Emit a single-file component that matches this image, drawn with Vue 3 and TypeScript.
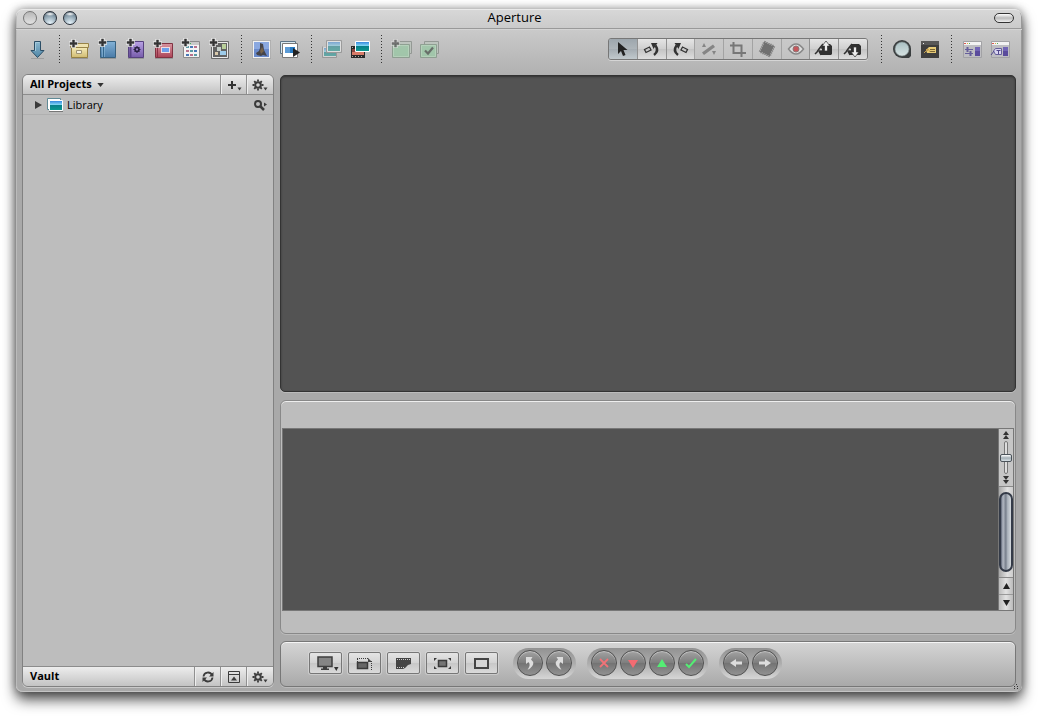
<script setup lang="ts">
import { ref } from 'vue'

const project = ref('All Projects')
const zoomLevel = ref(50)
const tool = ref('Selection')

interface Tool {
  name: string
  off?: boolean
}

const tools: Tool[] = [
  { name: 'Selection' },
  { name: 'Rotate left' },
  { name: 'Rotate right' },
  { name: 'Straighten', off: true },
  { name: 'Crop', off: true },
  { name: 'Spot and patch', off: true },
  { name: 'Red eye', off: true },
  { name: 'Lift' },
  { name: 'Stamp' },
]
</script>

<template>
  <div class="desktop">
    <svg class="defs" width="0" height="0" aria-hidden="true">
      <defs>
        <linearGradient id="blue" x2="0" y2="1"><stop stop-color="#83b2d6" /><stop offset="1" stop-color="#4a7ba8" /></linearGradient>
        <linearGradient id="arrow" x2="0" y2="1"><stop stop-color="#8db9d0" /><stop offset="1" stop-color="#4f86a6" /></linearGradient>
        <linearGradient id="purple" x2="0" y2="1"><stop stop-color="#b9a2e4" /><stop offset="1" stop-color="#775cab" /></linearGradient>
        <linearGradient id="red" x2="0" y2="1"><stop stop-color="#d795a0" /><stop offset="1" stop-color="#ac4457" /></linearGradient>
        <linearGradient id="gold" x2="0" y2="1"><stop stop-color="#f5ebb8" /><stop offset="1" stop-color="#d0bb72" /></linearGradient>
        <linearGradient id="sea" x2="0" y2="1">
          <stop stop-color="#2b7ddb" /><stop offset="0.45" stop-color="#86dcf5" /><stop offset="0.5" stop-color="#087f89" /><stop offset="1" stop-color="#0b9b90" />
        </linearGradient>
        <linearGradient id="lens" x2="0" y2="1"><stop stop-color="#a9bfc2" /><stop offset="1" stop-color="#d6e2e2" /></linearGradient>
      </defs>
      <symbol id="plus" viewBox="0 0 9 9">
        <path d="M2 0h5v2h2v5H7v2H2V7H0V2h2z" fill="#e4e4e4" opacity=".8" />
        <path d="M3.500 1h2v2.500H8v2H5.500V8h-2V5.500H1v-2h2.500z" fill="#333" stroke="#333" stroke-width=".4" />
      </symbol>
      <symbol id="gear" viewBox="0 0 16 12">
        <circle cx="6" cy="6" r="2.800" fill="none" stroke="#3c3c3c" stroke-width="2" />
        <path d="M6 .5v2M6 9.500v2M.5 6h2M9.500 6h2M2.200 2.200l1.300 1.300M8.500 8.500l1.300 1.300M9.800 2.200L8.500 3.500M3.500 8.500L2.200 9.800" stroke="#3c3c3c" stroke-width="1.800" />
        <path d="M11.500 8.500h4L13.500 11.500z" fill="#3c3c3c" />
      </symbol>
    </svg>

    <div class="window">
      <header class="titlebar">
        <div class="lights">
          <button class="light off" aria-label="Close"></button>
          <button class="light" aria-label="Minimize"></button>
          <button class="light" aria-label="Zoom"></button>
        </div>
        <h1>Aperture</h1>
        <button class="pill" aria-label="Toggle toolbar"></button>
      </header>

      <div class="toolbar" role="toolbar">
        <button class="tool" aria-label="Import">
          <svg viewBox="0 0 28 28"><path d="M7 23.500h13" stroke="#777" opacity=".4" /><path d="M10.500 6.500h6v9h3.500l-6.500 7-6.500-7h3.500z" fill="url(#arrow)" stroke="#2c4e66" /><path d="M11.500 16V7.500h4" fill="none" stroke="#a5cbdc" /></svg>
        </button>
        <i class="sep"></i>
        <button class="tool" aria-label="New project">
          <svg viewBox="0 0 28 28"><path d="M5 23.500h17" stroke="#777" opacity=".5" /><path d="M5.500 12.500h16v10h-16z" fill="url(#gold)" stroke="#948043" /><path d="M4.500 8.500h18v4h-18z" fill="#eee2b0" stroke="#988449" /><path d="M10.500 15.500h5v3h-5z" fill="#f4f1de" stroke="#9d9275" /><use href="#plus" x="3" y="4" width="9" height="9" /></svg>
        </button>
        <button class="tool" aria-label="New album">
          <svg viewBox="0 0 28 28"><path d="M6 23.500h16" stroke="#777" opacity=".5" /><path d="M6.500 6.500h15v16h-15z" fill="url(#blue)" stroke="#38617f" /><path d="M9.500 7v15" stroke="#33658c" /><path d="M10.500 7v15M8.500 7v15" stroke="#8bb8d7" opacity=".6" /><use href="#plus" x="4" y="3" width="9" height="9" /></svg>
        </button>
        <button class="tool" aria-label="New smart album">
          <svg viewBox="0 0 28 28"><path d="M6 23.500h16" stroke="#777" opacity=".5" /><path d="M6.500 6.500h15v16h-15z" fill="url(#purple)" stroke="#56427e" /><path d="M8.500 7v15" stroke="#5b4488" stroke-width="2" /><circle cx="15" cy="14.500" r="2" fill="none" stroke="#292142" stroke-width="1.500" /><path d="M15 11v2M15 16v2M11.500 14.500h2M16.500 14.500h2M12.500 12l1.500 1.500M16 15.500l1.500 1.500M17.500 12L16 13.500M14 15.500L12.500 17" stroke="#292142" /><use href="#plus" x="4" y="3" width="9" height="9" /></svg>
        </button>
        <button class="tool" aria-label="New book">
          <svg viewBox="0 0 28 28"><path d="M5 23.500h18" stroke="#777" opacity=".5" /><path d="M5.500 8.500h17v14h-17z" fill="url(#red)" stroke="#813342" /><path d="M7.500 9v13" stroke="#8c3246" /><path d="M11 12h9v6h-9z" fill="#f1dce0" /><path d="M12 13h7v4h-7z" fill="#6d9feb" /><use href="#plus" x="3" y="4" width="9" height="9" /></svg>
        </button>
        <button class="tool" aria-label="New web page">
          <svg viewBox="0 0 28 28"><path d="M5.500 6.500h16v16h-16z" fill="#f4f4f4" stroke="#8b8b8b" /><path d="M6 7h15v3H6z" fill="#c9c9c9" /><path d="M8 11h3v2H8zM12 15h3v2h-3zM16 19h3v2h-3z" fill="#5b9ba5" /><path d="M12 11h3v2h-3zM16 15h3v2h-3zM8 19h3v2H8z" fill="#4a78b7" /><path d="M16 11h3v2h-3zM8 15h3v2H8zM12 19h3v2h-3z" fill="#b9718c" /><path d="M11 8.500h2" stroke="#45b55b" /><use href="#plus" x="3" y="3" width="9" height="9" /></svg>
        </button>
        <button class="tool" aria-label="New light table">
          <svg viewBox="0 0 28 28"><path d="M6.500 7.500h15v15h-15z" fill="#626262" stroke="#eaeaea" /><path d="M5.500 6.500h17v17h-17z" fill="none" stroke="#555" opacity=".8" /><path d="M11 12h4v4h-4z" fill="#c8d0cb" /><path d="M16 9h4v5h-4z" fill="#b9cf9a" /><path d="M14 16h6v4h-6z" fill="#9dcbe9" /><path d="M9 17h3v3H9z" fill="#d9c9ab" /><use href="#plus" x="3" y="3" width="9" height="9" /></svg>
        </button>
        <i class="sep"></i>
        <button class="tool" aria-label="E-mail">
          <svg viewBox="0 0 28 28"><path d="M4.500 5.500h18v18h-18z" fill="#f2f2f2" stroke="#888" stroke-dasharray="1 1" /><path d="M6 7h15v15H6z" fill="#6a8acb" /><path d="M6 7h15v7H6z" fill="#8aa8e0" /><path d="M12 8l3 1 1 6 2 4 1 2-4-1-2 1-4-1-1-2 3-2 1-3z" fill="#45444a" /><path d="M12 16l2-4 2 4-3 3z" fill="#77634b" /></svg>
        </button>
        <button class="tool" aria-label="Slideshow">
          <svg viewBox="0 0 28 28"><path d="M4.500 6.500h15v12h-15z" fill="#dceaf1" stroke="#5c7487" /><path d="M6.500 8.500h15v14h-15z" fill="#fff" stroke="#777" /><path d="M9 12h10v6H9z" fill="#277bc4" /><path d="M9 12h5v6H9z" fill="#5b9bd6" /><path d="M17 13l7 4.500-7 4.500z" fill="#222" /></svg>
        </button>
        <i class="sep"></i>
        <button class="tool" disabled aria-label="Stack">
          <svg viewBox="0 0 28 28" opacity=".5"><path d="M5.500 12.500h13v9h-13z" fill="url(#sea)" stroke="#eee" /><path d="M9.500 6.500h13v10h-13z" fill="url(#sea)" stroke="#fff" /><path d="M8.500 5.500h15v12h-15zM4.500 11.500v11h14v-5" fill="none" stroke="#777" /></svg>
        </button>
        <button class="tool" aria-label="New version from master">
          <svg viewBox="0 0 28 28"><path d="M5 11h14v12H5z" fill="#292929" /><path d="M6 12.500h12M6 21.500h12" stroke="#b5aaa2" stroke-dasharray="1 2" /><path d="M6 14h12v6H6z" fill="#8c4640" /><path d="M6 17h12v3H6z" fill="#d87c69" /><path d="M9.500 6.500h14v10h-14z" fill="url(#sea)" stroke="#fff" /></svg>
        </button>
        <i class="sep"></i>
        <button class="tool" disabled aria-label="Add keyword set">
          <svg viewBox="0 0 28 28" opacity=".75"><path d="M9.500 6.500h14v12h-14z" fill="#bcc6bd" stroke="#858c86" /><path d="M4.500 9.500h17v13h-17z" fill="#98c9a4" stroke="#7e9583" /><path d="M5.500 10.500h15v11h-15z" fill="none" stroke="#b2d7b9" /><use href="#plus" x="3" y="4" width="9" height="9" opacity=".75" /></svg>
        </button>
        <button class="tool" disabled aria-label="Pick">
          <svg viewBox="0 0 28 28" opacity=".75"><path d="M8.500 6.500h14v12h-14z" fill="#bcc6bd" stroke="#858c86" /><path d="M4.500 9.500h16v13h-16z" fill="#98c9a4" stroke="#7e9583" /><path d="M5.500 10.500h14v11h-14z" fill="none" stroke="#b2d7b9" /><path d="M9 15.500l3 3 5-6" fill="none" stroke="#4c554e" stroke-width="2.200" /></svg>
        </button>

        <div class="segments">
          <button
            v-for="(t, n) in tools"
            :key="t.name"
            :class="{ active: tool === t.name }"
            :disabled="t.off"
            :aria-label="t.name"
            @click="tool = t.name"
          >
            <svg viewBox="0 0 22 18">
              <path v-if="n === 0" d="M6 2v12l3-3 2 5 2.500-1-2-5h4z" fill="#222" />
              <g v-else-if="n === 1"><path d="M3.500 9.500l5-2.500 1.500 3-5 2.500z" fill="none" stroke="#333" stroke-width="1.300" /><path d="M13 15c4-3 4-6 1.500-9.500" fill="none" stroke="#333" stroke-width="2.400" /><path d="M10 3h6.500l-4 6z" fill="#333" /></g>
              <g v-else-if="n === 2"><path d="M18.500 9.500l-5-2.500-1.500 3 5 2.500z" fill="none" stroke="#333" stroke-width="1.300" /><path d="M9 15c-4-3-4-6-1.500-9.500" fill="none" stroke="#333" stroke-width="2.400" /><path d="M12 3H5.500l4 6z" fill="#333" /></g>
              <g v-else-if="n === 3" fill="#858585"><path d="M4 12.500l11-8 2 2.500-11 8zM6 3l2 4H4zM14 11h4l-2 4z" /></g>
              <path v-else-if="n === 4" d="M3 5.500h11.500V17M6.500 2v11H19" fill="none" stroke="#777" stroke-width="2" />
              <g v-else-if="n === 5" transform="rotate(25 11 9)"><path d="M6 4h10v10H6z" fill="#707070" /><path d="M5.500 3.500h11v11h-11z" fill="none" stroke="#707070" stroke-width="2" stroke-dasharray="1.200 1" /></g>
              <g v-else-if="n === 6"><path d="M3.500 9q7.500-10 15 0-7.500 10-15 0z" fill="#ddd" stroke="#888" stroke-width="1.500" /><circle cx="11" cy="9" r="3" fill="#c5575c" stroke="#8d7777" /></g>
              <g v-else>
                <path d="M10 4h7l2 2v8l-1 1H8l-2-4z" fill="#303030" /><path d="M10 4L6 9l-2 3-2 2M6 11l2 4" fill="none" stroke="#303030" stroke-width="1.500" /><circle cx="8" cy="9.500" r="1" fill="#ddd" />
                <path v-if="n === 7" d="M13 1l4 5h-2.500v5h-3V6H9z" fill="#eee" stroke="#303030" stroke-width=".7" />
                <path v-else d="M13 17l4-5h-2.500V7h-3v5H9z" fill="#eee" stroke="#303030" stroke-width=".7" />
              </g>
            </svg>
          </button>
        </div>
        <i class="sep"></i>
        <button class="tool" aria-label="Loupe">
          <svg viewBox="0 0 28 28"><path d="M14 5a9 9 0 0 1 9 9v7l-2 2h-7a9 9 0 1 1 0-18z" fill="#3a3e3f" /><circle cx="14" cy="14" r="7" fill="url(#lens)" stroke="#7d8a8c" stroke-width=".6" /></svg>
        </button>
        <button class="tool" aria-label="Keywords">
          <svg viewBox="0 0 28 28"><path d="M5 6h18v17H5z" fill="#3e3e3e" /><path d="M5 6h18v4H5z" fill="#585858" /><path d="M7 8.500h1" stroke="#eee" /><path d="M10 15l3-3h7v6h-9z" fill="#e7cb77" /><path d="M14 14.500h5M14 16.500h5" stroke="#7b6636" /><path d="M8 18l4-4 2 3M10 14l2 2" fill="none" stroke="#c8a14e" /></svg>
        </button>
        <i class="sep"></i>
        <button class="tool" aria-label="Adjustments">
          <svg viewBox="0 0 28 28"><path d="M5.500 6.500h18v16h-18z" fill="#bebec2" stroke="#a2a2a5" /><path d="M6 7h17v3H6z" fill="#f3f3f3" /><path d="M6 8.500h2" stroke="#d95952" /><path d="M9 8.500h1" stroke="#d9b343" /><path d="M11 8.500h1" stroke="#51b35a" /><path d="M17 12h5v9h-5z" fill="#5a4b9c" /><path d="M17 12h5v4h-5z" fill="#7265b5" /><path d="M7 14.500h8M7 18.500h8" stroke="#665f9b" /><path d="M9.500 12v5M12.500 16v5" stroke="#665f9b" stroke-width="2" /></svg>
        </button>
        <button class="tool" aria-label="Metadata">
          <svg viewBox="0 0 28 28"><path d="M5.500 6.500h18v16h-18z" fill="#bebec2" stroke="#a2a2a5" /><path d="M6 7h17v3H6z" fill="#f3f3f3" /><path d="M6 8.500h2" stroke="#d95952" /><path d="M9 8.500h1" stroke="#d9b343" /><path d="M11 8.500h1" stroke="#51b35a" /><path d="M17 12h5v9h-5z" fill="#5a4b9c" /><path d="M17 12h5v4h-5z" fill="#7265b5" /><path d="M7.500 16l2-2.500h6v6h-6z" fill="#d9d5ef" stroke="#665f9b" /><path d="M10.500 15.500h4M12.500 15v4M5 20l3-4" stroke="#51488d" /></svg>
        </button>
      </div>

      <main class="workspace">
        <aside class="sidebar">
          <div class="bar">
            <select v-model="project" aria-label="Projects shown">
              <option>All Projects</option>
            </select>
            <svg class="caret" viewBox="0 0 8 5"><path d="M0 0h8L4 5z" fill="#333" /></svg>
            <span class="grow"></span>
            <button class="cell" aria-label="Add">
              <svg width="16" height="12" viewBox="0 0 16 12"><path d="M6 2v8M2 6h8" stroke="#333" stroke-width="2" /><path d="M11.500 8.500h4L13.500 11.500z" fill="#3c3c3c" /></svg>
            </button>
            <button class="cell" aria-label="Project actions"><svg width="16" height="12"><use href="#gear" /></svg></button>
          </div>
          <ul class="tree">
            <li>
              <button class="twisty" aria-label="Expand Library"><svg viewBox="0 0 7 8"><path d="M0 0l7 4-7 4z" fill="#3a3a3a" /></svg></button>
              <svg class="photo" viewBox="0 0 16 14"><path d="M.5.5h13v11H.5z" fill="#fff" stroke="#5f8a96" /><path d="M2.500 2.500h13v10h-13z" fill="url(#sea)" stroke="#fff" /><path d="M2 13.500h14" stroke="#777" /></svg>
              <span class="grow">Library</span>
              <button class="find" aria-label="Search Library">
                <svg viewBox="0 0 14 12"><circle cx="5" cy="5" r="3" fill="none" stroke="#3a3a3a" stroke-width="2" /><path d="M7 7l4 4" stroke="#3a3a3a" stroke-width="2.500" /><path d="M11 3.500l3 2-3 2z" fill="#3a3a3a" /></svg>
              </button>
            </li>
          </ul>
          <div class="bar vault">
            <h2>Vault</h2>
            <span class="grow"></span>
            <button class="cell" aria-label="Update vault">
              <svg width="12" height="12" viewBox="0 0 12 12"><path d="M1.500 5.500C2 1 8 0 10 4M10.500 6.500C10 11 4 12 2 8" fill="none" stroke="#3c3c3c" stroke-width="1.800" /><path d="M11.500 1v4.500H7zM.5 11V6.500H5z" fill="#3c3c3c" /></svg>
            </button>
            <button class="cell" aria-label="Show vaults">
              <svg width="12" height="12" viewBox="0 0 12 12"><path d="M.5.5h11v11H.5zM1 3.500h10" fill="none" stroke="#3c3c3c" /><path d="M3 9.500h6L6 5.500z" fill="#3c3c3c" /></svg>
            </button>
            <button class="cell" aria-label="Vault actions"><svg width="16" height="12"><use href="#gear" /></svg></button>
          </div>
        </aside>

        <div class="stage">
          <section class="viewer" aria-label="Viewer"></section>

          <section class="browser" aria-label="Browser">
            <div class="strip"></div>
            <div class="rail">
              <div class="sizer">
                <svg viewBox="0 0 6 8"><path d="M3 0l3 4H0zM3 4l3 4H0z" fill="#333" /></svg>
                <input v-model="zoomLevel" type="range" min="0" max="100" aria-label="Thumbnail size" />
                <svg viewBox="0 0 6 8"><path d="M0 0h6L3 4zM0 4h6L3 8z" fill="#333" /></svg>
              </div>
              <div class="track"><div class="thumb"></div></div>
              <button class="step" aria-label="Scroll up"><svg viewBox="0 0 7 6"><path d="M3.500 0L7 6H0z" fill="#222" /></svg></button>
              <button class="step" aria-label="Scroll down"><svg viewBox="0 0 7 6"><path d="M0 0h7L3.500 6z" fill="#222" /></svg></button>
            </div>
          </section>

          <footer class="controls">
            <div class="boxes">
              <button aria-label="Viewer mode"><svg viewBox="0 0 31 20"><path d="M8 4h14v9.500H8z" fill="#858585" stroke="#3e3e3e" stroke-width="1.500" /><path d="M13 14h4v1.500h2V17h-8v-1.500h2z" fill="#3e3e3e" /><path d="M24 14h4.500l-2.200 4z" fill="#333" /></svg></button>
              <button aria-label="Primary only"><svg viewBox="0 0 31 20"><path d="M8.500 9.500h10v6h-10z" fill="#666" stroke="#3a3a3a" stroke-width="1.500" /><path d="M8 5.500h11M22.500 8v9M8.500 6v3" fill="none" stroke="#3a3a3a" stroke-dasharray="1 1" /><path d="M19 5l4 4h-4z" fill="#444" /></svg></button>
              <button aria-label="Show master"><svg viewBox="0 0 31 20"><path d="M8 5h15v6l-3 1-3 3-2 1H8z" fill="#444" /><path d="M9 6.500h13M9 14.500h7" stroke="#ccc" stroke-dasharray="1 1" /></svg></button>
              <button aria-label="Zoom to fit"><svg viewBox="0 0 31 20"><path d="M11.500 7.500h8v6h-8z" fill="#747474" stroke="#3a3a3a" stroke-width="1.500" /><path d="M7 5h3L7 8zM24 5h-3l3 3zM7 16h3l-3-3zM24 16h-3l3-3z" fill="#3a3a3a" /></svg></button>
              <button aria-label="Full screen"><svg viewBox="0 0 31 20"><path d="M9 6h13v9H9z" fill="#d5d5d5" stroke="#444" stroke-width="2" /></svg></button>
            </div>
            <div class="rounds">
              <button aria-label="Rotate left"><svg viewBox="0 0 24 24"><path d="M8 6h6.500L13 8.500q5 4-1 9-3 2-2 .5 3-4 .5-7L8 13z" fill="#ddd" /></svg></button>
              <button aria-label="Rotate right"><svg viewBox="0 0 24 24"><path d="M16 6H9.500L11 8.500q-5 4 1 9 3 2 2 .5-3-4-.5-7L16 13z" fill="#ddd" /></svg></button>
            </div>
            <div class="rounds">
              <button aria-label="Reject"><svg viewBox="0 0 24 24"><path d="M8 8l8 8M16 8l-8 8" stroke="#f17378" stroke-width="1.800" /></svg></button>
              <button aria-label="Decrease rating"><svg viewBox="0 0 24 24"><path d="M7 9h10l-5 8z" fill="#f36b72" /></svg></button>
              <button aria-label="Increase rating"><svg viewBox="0 0 24 24"><path d="M7 16h10l-5-8z" fill="#54ed74" /></svg></button>
              <button aria-label="Select"><svg viewBox="0 0 24 24"><path d="M7 13l3 3 7-8" fill="none" stroke="#54ed74" stroke-width="2" /></svg></button>
            </div>
            <div class="rounds">
              <button aria-label="Previous image"><svg viewBox="0 0 24 24"><path d="M6 12l6-4v2.500h6v3h-6V16z" fill="#ddd" /></svg></button>
              <button aria-label="Next image"><svg viewBox="0 0 24 24"><path d="M18 12l-6-4v2.500H6v3h6V16z" fill="#ddd" /></svg></button>
            </div>
          </footer>
        </div>
      </main>
      <svg class="grip" viewBox="0 0 5 5" aria-hidden="true"><path d="M3 .5h1M1 2.500h1M4 2.500h1M1 4.500h1M4 4.500h1" stroke="#333" /></svg>
    </div>
  </div>
</template>

<style>
html,
body {
  background: #fff;
}
</style>

<style scoped>
.desktop {
  box-sizing: border-box;
  min-height: 100vh;
  display: flex;
  padding: 9px 16px 25px;
  overflow: hidden;
  font-family: 'Lucida Grande', 'Open Sans', 'Noto Sans', sans-serif;
  font-size: 11px;
  color: #000;
}
.desktop * {
  box-sizing: border-box;
}
.defs {
  position: absolute;
}
button {
  display: flex;
  align-items: center;
  justify-content: center;
  padding: 0;
  border: 0;
  background: none;
}
svg {
  display: block;
}
.grow {
  flex: 1;
}
.window {
  position: relative;
  flex: 1;
  display: flex;
  flex-direction: column;
  border-radius: 7px;
  background: linear-gradient(#d8d8d8, #cacaca 20px, #a9a9a9 80px, #a9a9a9);
  box-shadow:
    inset 0 1px #e9e9e9,
    inset 1px 0 #bbb,
    inset -1px 0 #999,
    inset 0 -1px #c4c4c4,
    0 0 10px rgba(0, 0, 0, 0.4),
    0 8px 14px rgba(0, 0, 0, 0.65);
}
.titlebar {
  display: grid;
  grid-template-columns: 1fr auto 1fr;
  align-items: center;
  height: 20px;
  padding: 0 8px 2px 7px;
  border-bottom: 1px solid #999;
  box-shadow: 0 1px #d4d4d4;
}
.titlebar h1 {
  margin: 0;
  padding-right: 8px;
  font-size: 13px;
  line-height: 17px;
  font-weight: 400;
}
.lights {
  display: flex;
  gap: 6px;
}
.light {
  width: 14px;
  height: 14px;
  border: 1px solid #29303a;
  border-radius: 50%;
  background:
    radial-gradient(ellipse 5px 2px at 50% 2px, #fff, transparent),
    radial-gradient(circle at 50% 95%, #e9f6fd, #8ba0ae 60%, #4f5d69);
}
.light.off {
  border-color: #777;
  background: linear-gradient(#b8b8b8, #e2e2e2);
}
.pill {
  justify-self: end;
  width: 20px;
  height: 10px;
  border: 1px solid #333;
  border-radius: 5px;
  background: linear-gradient(#fff, #bbb 50%, #eee);
}
.toolbar {
  display: flex;
  height: 45px;
  padding: 6px 8px 0;
}
.tool {
  width: 28px;
  height: 28px;
}
.tool svg {
  width: 28px;
  height: 28px;
}
.sep {
  flex: none;
  width: 14px;
  height: 28px;
  background: repeating-linear-gradient(#333 0 1px, transparent 1px 3px) center / 1px 28px no-repeat;
}
.segments {
  display: flex;
  width: 260px;
  height: 22px;
  margin: 3px 6px 0 auto;
  border: 1px solid #777;
  border-radius: 3px;
  box-shadow: 0 1px #d5d5d5;
  overflow: hidden;
}
.segments button {
  flex: 1;
  background: linear-gradient(#e5e5e5, #cfcfcf 50%, #c3c3c3 50%, #dedede);
}
.segments button + button {
  border-left: 1px solid #929292;
}
.segments button:disabled {
  background: linear-gradient(#c9c9c9, #c2c2c2);
  border-color: #a3a3a3;
}
.segments button.active {
  background: linear-gradient(#9da6ad, #aeb5ba 50%, #a3abb1 50%, #c1c9cd);
}
.segments svg {
  width: 22px;
  height: 18px;
}
.workspace {
  flex: 1;
  display: grid;
  grid-template-columns: 252px 1fr;
  gap: 6px;
  padding: 0 6px 5px;
}
.sidebar {
  display: flex;
  flex-direction: column;
  border: 1px solid #818181;
  border-radius: 6px;
  background: #bdbdbd;
  box-shadow: 0 1px #cacaca;
  overflow: hidden;
}
.bar {
  display: flex;
  align-items: center;
  height: 20px;
  padding: 0 1px 0 7px;
  border-bottom: 1px solid #8c8c8c;
  background: linear-gradient(#ededed, #c3c3c3);
}
.bar select,
.bar h2 {
  margin: 0;
  padding: 0 0 2px;
  appearance: none;
  border: 0;
  background: none;
  color: #000;
  font: 700 11px/16px 'Lucida Grande', 'Open Sans', 'Noto Sans', sans-serif;
}
.vault {
  border-top: 1px solid #8c8c8c;
  border-bottom: 0;
}
.caret {
  width: 7px;
  height: 4px;
  margin-left: 5px;
}
.cell {
  align-self: stretch;
  width: 26px;
  border-left: 1px solid #909090;
  box-shadow: inset 1px 0 #eee;
}
.tree {
  flex: 1;
  margin: 0;
  padding: 0;
  list-style: none;
}
.tree li {
  display: flex;
  align-items: center;
  height: 20px;
  padding: 0 6px 0 12px;
  border-bottom: 1px solid #b0b0b0;
}
.twisty svg {
  width: 7px;
  height: 8px;
}
.photo {
  width: 16px;
  height: 14px;
  margin: 0 4px 0 5px;
}
.find svg {
  width: 14px;
  height: 12px;
}
.stage {
  display: flex;
  flex-direction: column;
  min-width: 0;
}
.viewer {
  flex: 1;
  margin-top: 1px;
  border: 1px solid #333;
  border-radius: 5px;
  background: #535353;
  box-shadow:
    inset 0 1px 2px #333,
    0 1px #bcbcbc;
}
.browser {
  display: flex;
  height: 234px;
  margin-top: 8px;
  padding: 27px 1px 22px;
  border: 1px solid #888;
  border-radius: 6px;
  background: #bdbdbd;
  box-shadow:
    inset 0 1px #eee,
    0 1px #bbb;
}
.strip {
  flex: 1;
  border: 1px solid #777;
  border-right: 0;
  background: #535353;
}
.rail {
  display: flex;
  flex-direction: column;
  width: 16px;
  border: 1px solid #777;
  background: #c6c6c6;
}
.sizer {
  display: flex;
  flex-direction: column;
  align-items: center;
  gap: 2px;
  height: 58px;
  padding-top: 2px;
  border-bottom: 1px solid #888;
}
.sizer svg {
  width: 6px;
  height: 8px;
}
.sizer input {
  appearance: none;
  writing-mode: vertical-lr;
  width: 12px;
  height: 33px;
  margin: 0;
  background: none;
}
.sizer input::-webkit-slider-runnable-track {
  width: 4px;
  border: 1px solid #777;
  border-radius: 2px;
  background: #ddd;
}
.sizer input::-webkit-slider-thumb {
  appearance: none;
  width: 12px;
  height: 8px;
  margin-left: -5px;
  border: 1px solid #4b535a;
  border-radius: 2px;
  background: linear-gradient(#fff, #a4afb6 50%, #d7e0e4);
}
.track {
  flex: 1;
  padding: 5px 0;
  border-bottom: 1px solid #888;
  background: linear-gradient(90deg, #a8a8a8, #e1e1e1 60%, #ccc);
}
.thumb {
  height: 100%;
  border: 2px solid #343b48;
  border-radius: 7px;
  background: linear-gradient(90deg, #596172, #b4bac4 20%, #737b87 50%, #a3abb5 60%, #d3d8dc);
}
.step {
  height: 16px;
  background: linear-gradient(90deg, #bbb, #e2e2e2 50%, #bbb);
}
.step + .step {
  border-top: 1px solid #999;
}
.step svg {
  width: 7px;
  height: 6px;
}
.controls {
  display: flex;
  align-items: center;
  gap: 11px;
  height: 46px;
  margin-top: 7px;
  padding: 0 0 2px 28px;
  border: 1px solid #777;
  border-radius: 6px;
  background: linear-gradient(#d5d5d5, #a9a9a9);
  box-shadow:
    inset 0 1px #f5f5f5,
    0 1px #bbb;
}
.boxes {
  display: flex;
  gap: 6px;
  margin-right: 4px;
}
.boxes button {
  width: 33px;
  height: 22px;
  border: 1px solid #777;
  border-radius: 2px;
  background: linear-gradient(#e4e4e4, #d3d3d3 50%, #c7c7c7 50%, #dadada);
  box-shadow: 0 0 0 1px rgba(225, 225, 225, 0.5);
}
.boxes svg {
  width: 31px;
  height: 20px;
}
.rounds {
  display: flex;
  gap: 3px;
  padding: 2px 4px 3px;
  border-radius: 16px;
  background: linear-gradient(#929292, #adadad 50%, #d6d6d6);
}
.rounds button {
  width: 26px;
  height: 26px;
  border: 1px solid #505050;
  border-radius: 50%;
  background: linear-gradient(#a3a3a3, #7d7d7d 50%, #737373 50%, #929292);
  box-shadow: inset 0 1px 1px #c5c5c5;
}
.rounds svg {
  width: 24px;
  height: 24px;
}
.grip {
  position: absolute;
  right: 4px;
  bottom: 3px;
  width: 5px;
  height: 5px;
}
</style>
